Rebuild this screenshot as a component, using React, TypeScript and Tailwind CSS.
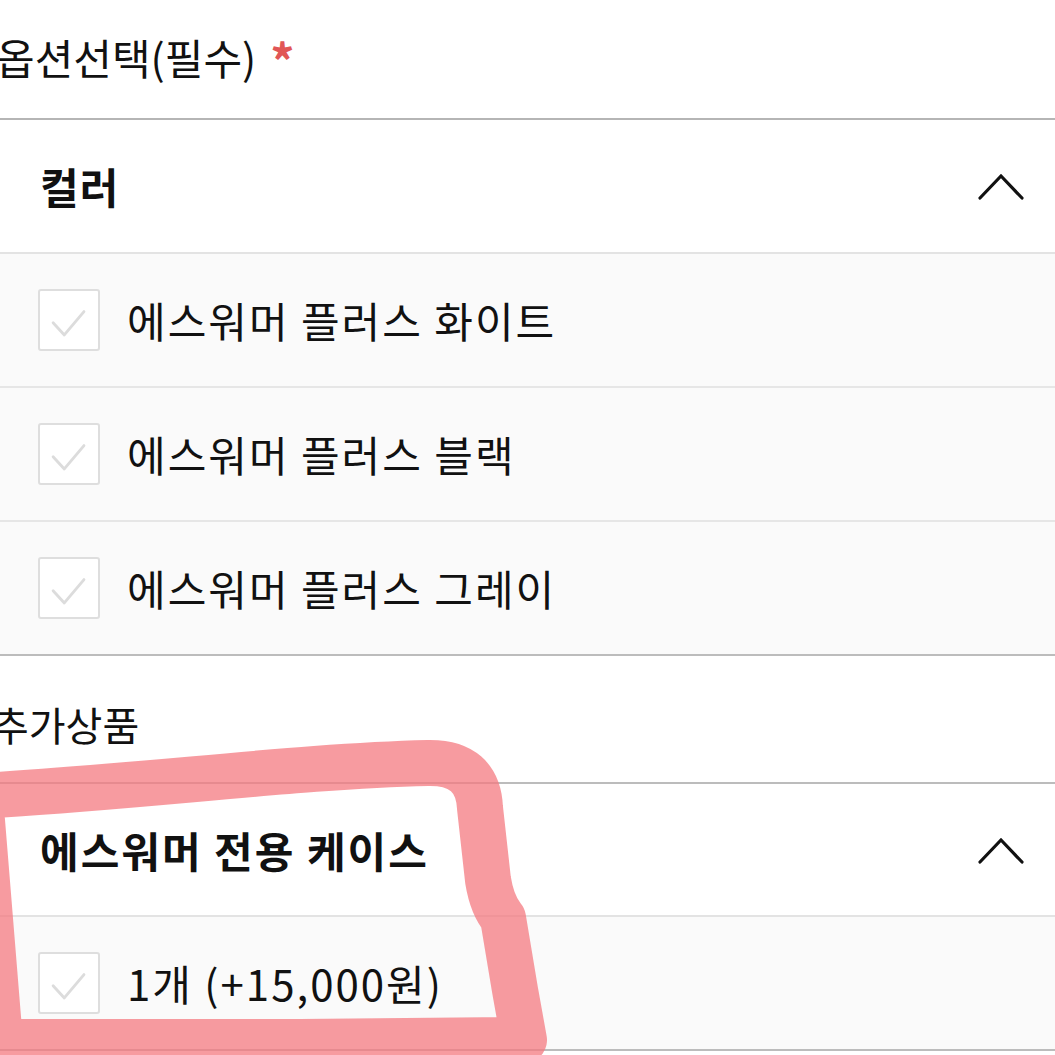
import React from "react";

const FONT = { fontFamily: '"Noto Sans CJK KR", "Noto Sans", sans-serif' };

function Chevron() {
  return (
    <svg width="50" height="30" viewBox="0 0 50 30" fill="none">
      <polyline points="3,27 24,5 45,27" stroke="#111" strokeWidth="3.2" strokeLinecap="round" strokeLinejoin="miter" />
    </svg>
  );
}

function Check() {
  return (
    <div className="w-[62px] h-[62px] shrink-0 border-2 border-[#dedede] rounded-[3px] bg-white flex items-center justify-center">
      <svg width="62" height="62" viewBox="0 0 62 62" fill="none">
        <polyline points="14,34 26,47 47,22" stroke="#dcdcdc" strokeWidth="3" strokeLinecap="round" strokeLinejoin="round" />
      </svg>
    </div>
  );
}

function Item({ label, last }: { label: string; last?: boolean }) {
  return (
    <div className={`h-[134px] bg-[#fafafa] flex items-center pl-[38px] gap-[27px] border-b-2 ${last ? "border-[#bcbcbc]" : "border-[#e6e6e6]"}`}>
      <Check />
      <span className="text-[42px] text-[#111] leading-none tracking-[2px]">{label}</span>
    </div>
  );
}

export default function App() {
  return (
    <div className="relative w-[1055px] h-[1055px] overflow-hidden bg-white" style={FONT}>
      <div className="h-[120px] flex items-center border-b-2 border-[#b5b5b5]">
        <span className="-ml-[4px] text-[42px] text-[#111] leading-none pb-[4px]">옵션선택(필수)</span>
        <span className="ml-[14px] text-[48px] text-[#e15656] font-bold leading-none">*</span>
      </div>
      <div className="h-[134px] flex items-center justify-between pl-[40px] pr-[28px] border-b-2 border-[#e3e3e3]">
        <span className="text-[42px] font-bold text-[#111] leading-none tracking-[1px]">컬러</span>
        <Chevron />
      </div>
      <Item label="에스워머 플러스 화이트" />
      <Item label="에스워머 플러스 블랙" />
      <Item label="에스워머 플러스 그레이" last />
      <div className="h-[128px] flex items-center border-b-2 border-[#bcbcbc]">
        <span className="-ml-[8px] text-[40px] text-[#111] leading-none pt-[10px]">추가상품</span>
      </div>
      <div className="h-[133px] flex items-center justify-between pl-[40px] pr-[28px] border-b-2 border-[#e3e3e3]">
        <span className="text-[42px] font-bold text-[#111] leading-none tracking-[2px]">에스워머 전용 케이스</span>
        <Chevron />
      </div>
      <Item label="1개 (+15,000원)" last />
      <svg className="absolute left-0 top-0 pointer-events-none" width="1055" height="1055" viewBox="0 0 1055 1055" fill="none">
        <path
          d="M -20 796 C 150 786, 300 766, 428 763 Q 478 762 480 808 L 488 880 Q 492 905 503 918 L 515 990 L 524 1040 L 300 1042 L 0 1042 Z"
          stroke="#f47a80"
          strokeOpacity="0.75"
          strokeWidth="46"
          strokeLinejoin="round"
          strokeLinecap="round"
        />
      </svg>
    </div>
  );
}
